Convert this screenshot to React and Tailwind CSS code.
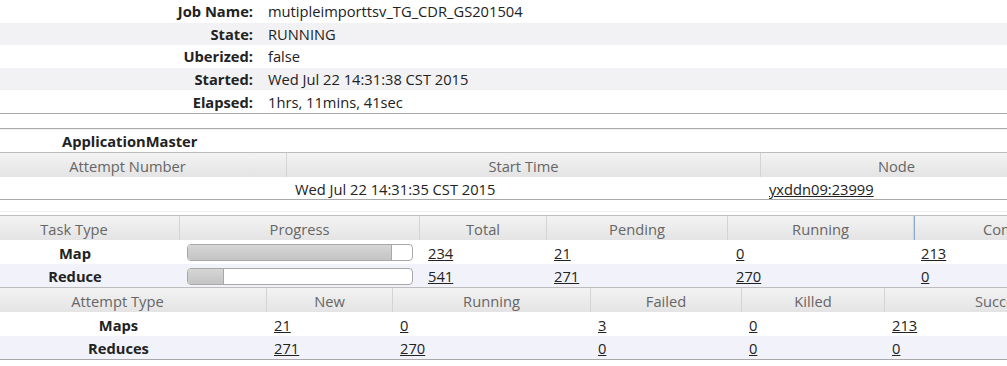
import React from 'react';

const info = [
  ['Job Name:', 'mutipleimporttsv_TG_CDR_GS201504'],
  ['State:', 'RUNNING'],
  ['Uberized:', 'false'],
  ['Started:', 'Wed Jul 22 14:31:38 CST 2015'],
  ['Elapsed:', '1hrs, 11mins, 41sec'],
];

// first column is partly scrolled off to the left, so its content sits off-centre
const taskCols = [
  { label: 'Task Type', w: 180, first: true },
  { label: 'Progress', w: 240 },
  { label: 'Total', w: 127 },
  { label: 'Pending', w: 181 },
  { label: 'Running', w: 186 },
  { label: 'Complete', w: 204, marked: true },
];

const tasks = [
  { type: 'Map', pct: 91, total: '234', pending: '21', running: '0', complete: '213' },
  { type: 'Reduce', pct: 16, total: '541', pending: '271', running: '270', complete: '0' },
];

const attemptCols = [
  { label: 'Attempt Type', w: 267, first: true },
  { label: 'New', w: 126 },
  { label: 'Running', w: 198 },
  { label: 'Failed', w: 151 },
  { label: 'Killed', w: 143 },
  { label: 'Successful', w: 252 },
];

const attempts = [
  { type: 'Maps', vals: ['21', '0', '3', '0', '213'] },
  { type: 'Reduces', vals: ['271', '270', '0', '0', '0'] },
];

function HeadCell({ label, w, marked, first }) {
  return (
    <div
      className={`shrink-0 h-full flex items-center justify-center pt-[2px] text-[#666] border-r border-[#d4d4d4] ${first ? 'pr-[31px]' : ''} ${marked ? 'border-l border-l-[#8aa8d0]' : ''}`}
      style={{ width: w }}
    >
      {label}
    </div>
  );
}

function HeadRow({ cols }) {
  return (
    <div className="flex h-[25px] border-t border-[#bdbdbd] bg-gradient-to-b from-[#f3f3f3] to-[#e4e4e4]">
      {cols.map((c) => (
        <HeadCell key={c.label} {...c} />
      ))}
    </div>
  );
}

function Link({ children }) {
  return <span className="underline text-[#222]">{children}</span>;
}

function Bar({ pct }) {
  return (
    <div className="w-[226px] h-[17px] rounded-[4px] border border-[#a8a8a8] bg-white overflow-hidden">
      <div
        className="h-full bg-gradient-to-b from-[#d6d6d6] to-[#c4c4c4] border-r border-[#a8a8a8]"
        style={{ width: `${pct}%` }}
      />
    </div>
  );
}

export default function App() {
  return (
    <div
      className="w-[1007px] h-[366px] overflow-hidden bg-white text-[14.7px] text-[#222]"
      style={{ fontFamily: '"Open Sans", "Liberation Sans", sans-serif' }}
    >
      <div className="w-[1300px]">
        {/* job overview */}
        <div className="border-b border-[#a9a9a9]">
          {info.map(([k, v], i) => (
            <div
              key={k}
              className={`flex items-center h-[22.6px] ${i % 2 === 1 ? 'bg-[#f2f2f5]' : 'bg-white'}`}
            >
              <div className="w-[253px] text-right font-bold">{k}</div>
              <div className="pl-[15px]">{v}</div>
            </div>
          ))}
        </div>

        <div className="h-[14px]" />

        {/* application master */}
        <div className="border-t border-[#a9a9a9]">
          <div className="h-[23px] flex items-end pl-[62px] font-bold border-t border-[#f0f0f0]">
            ApplicationMaster
          </div>
          <HeadRow
            cols={[
              { label: 'Attempt Number', w: 287, first: true },
              { label: 'Start Time', w: 474 },
              { label: 'Node', w: 272 },
            ]}
          />
          <div className="flex h-[23px] items-center pt-[2px] border-b border-[#a9a9a9]">
            <div className="w-[287px] shrink-0" />
            <div className="w-[474px] shrink-0 pl-[8px]">Wed Jul 22 14:31:35 CST 2015</div>
            <div className="w-[272px] shrink-0 pl-[8px]">
              <Link>yxddn09:23999</Link>
            </div>
          </div>
        </div>

        <div className="h-[11px]" />
        <div className="h-[4px] border-t border-[#f0f0f0]" />

        {/* tasks */}
        <HeadRow cols={taskCols} />
        {tasks.map((t, i) => (
          <div
            key={t.type}
            className={`flex items-center pt-[2px] ${i === 0 ? 'h-[24px] bg-white' : 'h-[23px] bg-[#f2f2fa]'}`}
          >
            <div className="w-[180px] shrink-0 text-center pr-[30px] font-bold">{t.type}</div>
            <div className="w-[240px] shrink-0 pl-[7px]">
              <Bar pct={t.pct} />
            </div>
            <div className="w-[127px] shrink-0 pl-[8px]"><Link>{t.total}</Link></div>
            <div className="w-[181px] shrink-0 pl-[7px]"><Link>{t.pending}</Link></div>
            <div className="w-[186px] shrink-0 pl-[8px]"><Link>{t.running}</Link></div>
            <div className="w-[204px] shrink-0 pl-[7px]"><Link>{t.complete}</Link></div>
          </div>
        ))}

        {/* attempts */}
        <HeadRow cols={attemptCols} />
        <div className="border-b border-[#a9a9a9]">
          {attempts.map((a, i) => (
            <div
              key={a.type}
              className={`flex items-center pt-[2px] ${i === 1 ? 'h-[23px] bg-[#f2f2fa]' : 'h-[24px] bg-white'}`}
            >
              <div className="w-[267px] shrink-0 text-center pr-[30px] font-bold">{a.type}</div>
              {a.vals.map((v, j) => (
                <div
                  key={j}
                  className="shrink-0 pl-[7px]"
                  style={{ width: attemptCols[j + 1].w }}
                >
                  <Link>{v}</Link>
                </div>
              ))}
            </div>
          ))}
        </div>
      </div>
    </div>
  );
}
